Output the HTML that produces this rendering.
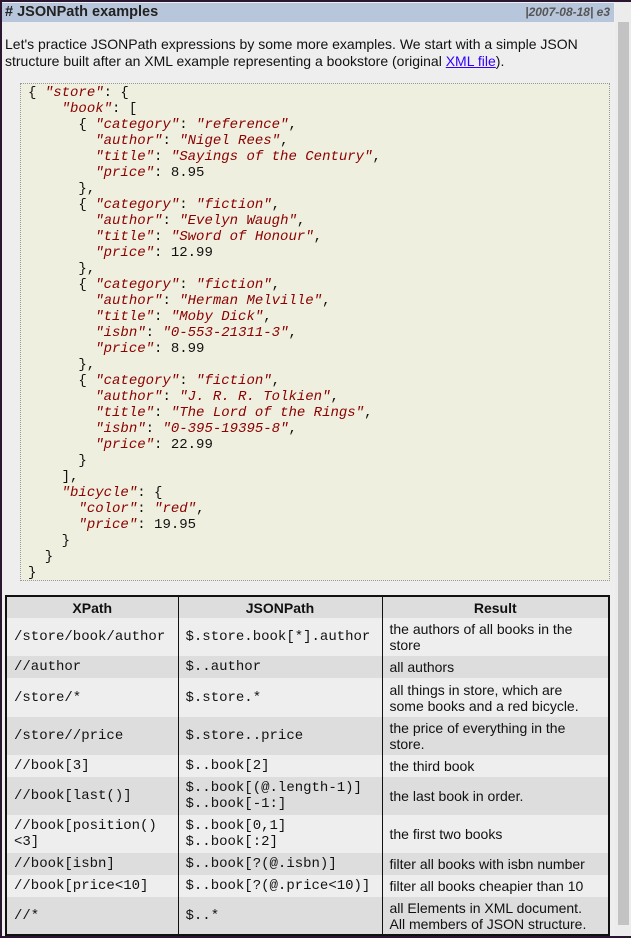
<!DOCTYPE html>
<html><head><meta charset="utf-8"><style>
*{margin:0;padding:0;box-sizing:border-box}
body{width:631px;height:938px;background:#eeeeee;overflow:hidden;position:relative;font-family:"Liberation Sans",sans-serif;color:#111}
.frame{position:absolute;left:0;top:0;width:631px;height:938px;border-top:2px solid #2a1630;border-left:2px solid #2a1630;border-bottom:2px solid #2a1630}
.hdr{position:absolute;left:2px;top:3px;width:612px;height:19px;background:#b8c6dc;font-weight:bold;font-size:14.5px;line-height:19px;padding-left:3px;color:#222}
.hdr span{position:absolute;right:4px;top:0;font-size:12px;font-style:italic;color:#555}
.sb{position:absolute;left:615px;top:2px;width:16px;height:934px;background:#ececec}
.th{position:absolute;left:618px;top:22px;width:11px;height:903px;background:#c3c3c3}
.p{position:absolute;left:5px;top:36px;font-size:14px;line-height:17px;width:610px}
.p a{color:#3300ff}
.code{position:absolute;left:20px;top:83px;width:590px;height:498px;background:#efefdf;border:1px dotted #999;font-family:"Liberation Mono",monospace;font-size:14px;line-height:16px;padding:1px 0 0 7px;white-space:pre;color:#111}
.code i{color:#8b0000}
table{position:absolute;left:5px;top:595px;width:605px;border-collapse:collapse;border:2px solid #111;font-size:14px}
td,th{border-left:1px solid #111;border-right:1px solid #111;padding:0 7px;vertical-align:middle;line-height:16px}
th{height:22px;background:#dddddd;font-weight:bold}
td.m{font-family:"Liberation Mono",monospace;font-size:14px}
tr.a td{background:#eeeeee}tr.b td{background:#dddddd}
</style></head><body>
<div class="frame"></div>
<div class="hdr"># JSONPath examples<span>|2007-08-18| e3</span></div>
<div class="sb"></div><div class="th"></div>
<div class="p">Let's practice JSONPath expressions by some more examples. We start with a simple JSON<br>structure built after an XML example representing a bookstore (original <a href="#">XML file</a>).</div>
<div class="code">{ <i>"store"</i>: {
    <i>"book"</i>: [
      { <i>"category"</i>: <i>"reference"</i>,
        <i>"author"</i>: <i>"Nigel Rees"</i>,
        <i>"title"</i>: <i>"Sayings of the Century"</i>,
        <i>"price"</i>: 8.95
      },
      { <i>"category"</i>: <i>"fiction"</i>,
        <i>"author"</i>: <i>"Evelyn Waugh"</i>,
        <i>"title"</i>: <i>"Sword of Honour"</i>,
        <i>"price"</i>: 12.99
      },
      { <i>"category"</i>: <i>"fiction"</i>,
        <i>"author"</i>: <i>"Herman Melville"</i>,
        <i>"title"</i>: <i>"Moby Dick"</i>,
        <i>"isbn"</i>: <i>"0-553-21311-3"</i>,
        <i>"price"</i>: 8.99
      },
      { <i>"category"</i>: <i>"fiction"</i>,
        <i>"author"</i>: <i>"J. R. R. Tolkien"</i>,
        <i>"title"</i>: <i>"The Lord of the Rings"</i>,
        <i>"isbn"</i>: <i>"0-395-19395-8"</i>,
        <i>"price"</i>: 22.99
      }
    ],
    <i>"bicycle"</i>: {
      <i>"color"</i>: <i>"red"</i>,
      <i>"price"</i>: 19.95
    }
  }
}</div>
<table>
<tr><th style="width:172px">XPath</th><th style="width:204px">JSONPath</th><th>Result</th></tr>
<tr class="a" style="height:38px"><td class="m">/store/book/author</td><td class="m">$.store.book[*].author</td><td>the authors of all books in the<br>store</td></tr>
<tr class="b" style="height:22px"><td class="m">//author</td><td class="m">$..author</td><td>all authors</td></tr>
<tr class="a" style="height:39px"><td class="m">/store/*</td><td class="m">$.store.*</td><td>all things in store, which are<br>some books and a red bicycle.</td></tr>
<tr class="b" style="height:38px"><td class="m">/store//price</td><td class="m">$.store..price</td><td>the price of everything in the<br>store.</td></tr>
<tr class="a" style="height:22px"><td class="m">//book[3]</td><td class="m">$..book[2]</td><td>the third book</td></tr>
<tr class="b" style="height:38px"><td class="m">//book[last()]</td><td class="m">$..book[(@.length-1)]<br>$..book[-1:]</td><td>the last book in order.</td></tr>
<tr class="a" style="height:38px"><td class="m">//book[position()<br>&lt;3]</td><td class="m">$..book[0,1]<br>$..book[:2]</td><td>the first two books</td></tr>
<tr class="b" style="height:22px"><td class="m">//book[isbn]</td><td class="m">$..book[?(@.isbn)]</td><td>filter all books with isbn number</td></tr>
<tr class="a" style="height:22px"><td class="m">//book[price&lt;10]</td><td class="m">$..book[?(@.price&lt;10)]</td><td>filter all books cheapier than 10</td></tr>
<tr class="b" style="height:38px"><td class="m">//*</td><td class="m">$..*</td><td>all Elements in XML document.<br>All members of JSON structure.</td></tr>
</table>
</body></html>
